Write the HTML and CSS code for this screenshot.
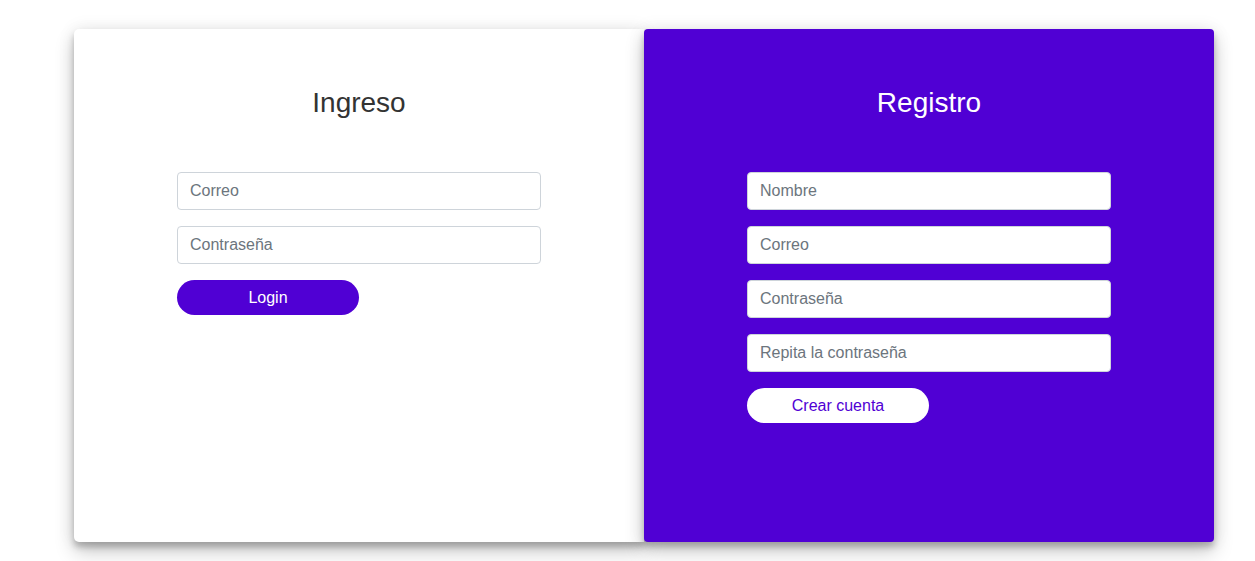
FILE: index.html
```html
<!DOCTYPE html>
<html lang="es">
<head>
<meta charset="utf-8">
<title>Ingreso / Registro</title>
<link rel="stylesheet" href="styles.css">
</head>
<body>
<main class="wrap">
  <section class="panel panel-login">
    <h2 class="title">Ingreso</h2>
    <form class="form">
      <input class="field" type="email" placeholder="Correo">
      <input class="field" type="password" placeholder="Contraseña">
      <button class="btn btn-login" type="button">Login</button>
    </form>
  </section>
  <section class="panel panel-register">
    <h2 class="title">Registro</h2>
    <form class="form">
      <input class="field" type="text" placeholder="Nombre">
      <input class="field" type="email" placeholder="Correo">
      <input class="field" type="password" placeholder="Contraseña">
      <input class="field" type="password" placeholder="Repita la contraseña">
      <button class="btn btn-register" type="button">Crear cuenta</button>
    </form>
  </section>
</main>
</body>
</html>
```
FILE: styles.css
```css
* { box-sizing: border-box; }
html { height: 100%; background: #ffffff; }
body {
  margin: 0;
  min-height: 100%;
  font-family: "Liberation Sans", Arial, sans-serif;
  padding: 29px 0 0 74px;
}
.wrap {
  display: flex;
  width: 1140px;
  height: 513px;
}
.panel {
  width: 570px;
  height: 513px;
  padding-top: 58px;
  display: flex;
  flex-direction: column;
  align-items: center;
  box-shadow: 0 10px 20px rgba(0,0,0,0.2), 0 5px 6px rgba(0,0,0,0.22), 0 0 18px rgba(0,0,0,0.08);
}
.panel-login {
  background: #ffffff;
  border-radius: 5px 0 0 5px;
  position: relative;
  z-index: 1;
}
.panel-register {
  background: #5000d4;
  border-radius: 4px;
  position: relative;
  z-index: 2;
}
.title {
  margin: 0;
  font-size: 28px;
  line-height: 32px;
  font-weight: 400;
  color: #333333;
}
.panel-register .title { color: #ffffff; }
.form {
  margin-top: 53px;
  width: 364px;
  display: flex;
  flex-direction: column;
  align-items: flex-start;
  gap: 16px;
}
.field {
  width: 364px;
  height: 38px;
  padding: 0 12px;
  border: 1px solid #ced4da;
  border-radius: 4px;
  background: #ffffff;
  font-family: "Liberation Sans", Arial, sans-serif;
  font-size: 16px;
  color: #495057;
  outline: none;
}
.field::placeholder { color: #6c757d; }
.panel-register .field { border-color: #ced4da; }
.btn {
  width: 182px;
  height: 35px;
  border: none;
  border-radius: 18px;
  font-family: "Liberation Sans", Arial, sans-serif;
  font-size: 16px;
  cursor: pointer;
}
.btn-login { background: #5000d4; color: #ffffff; }
.btn-register { background: #ffffff; color: #5000d4; }
```
